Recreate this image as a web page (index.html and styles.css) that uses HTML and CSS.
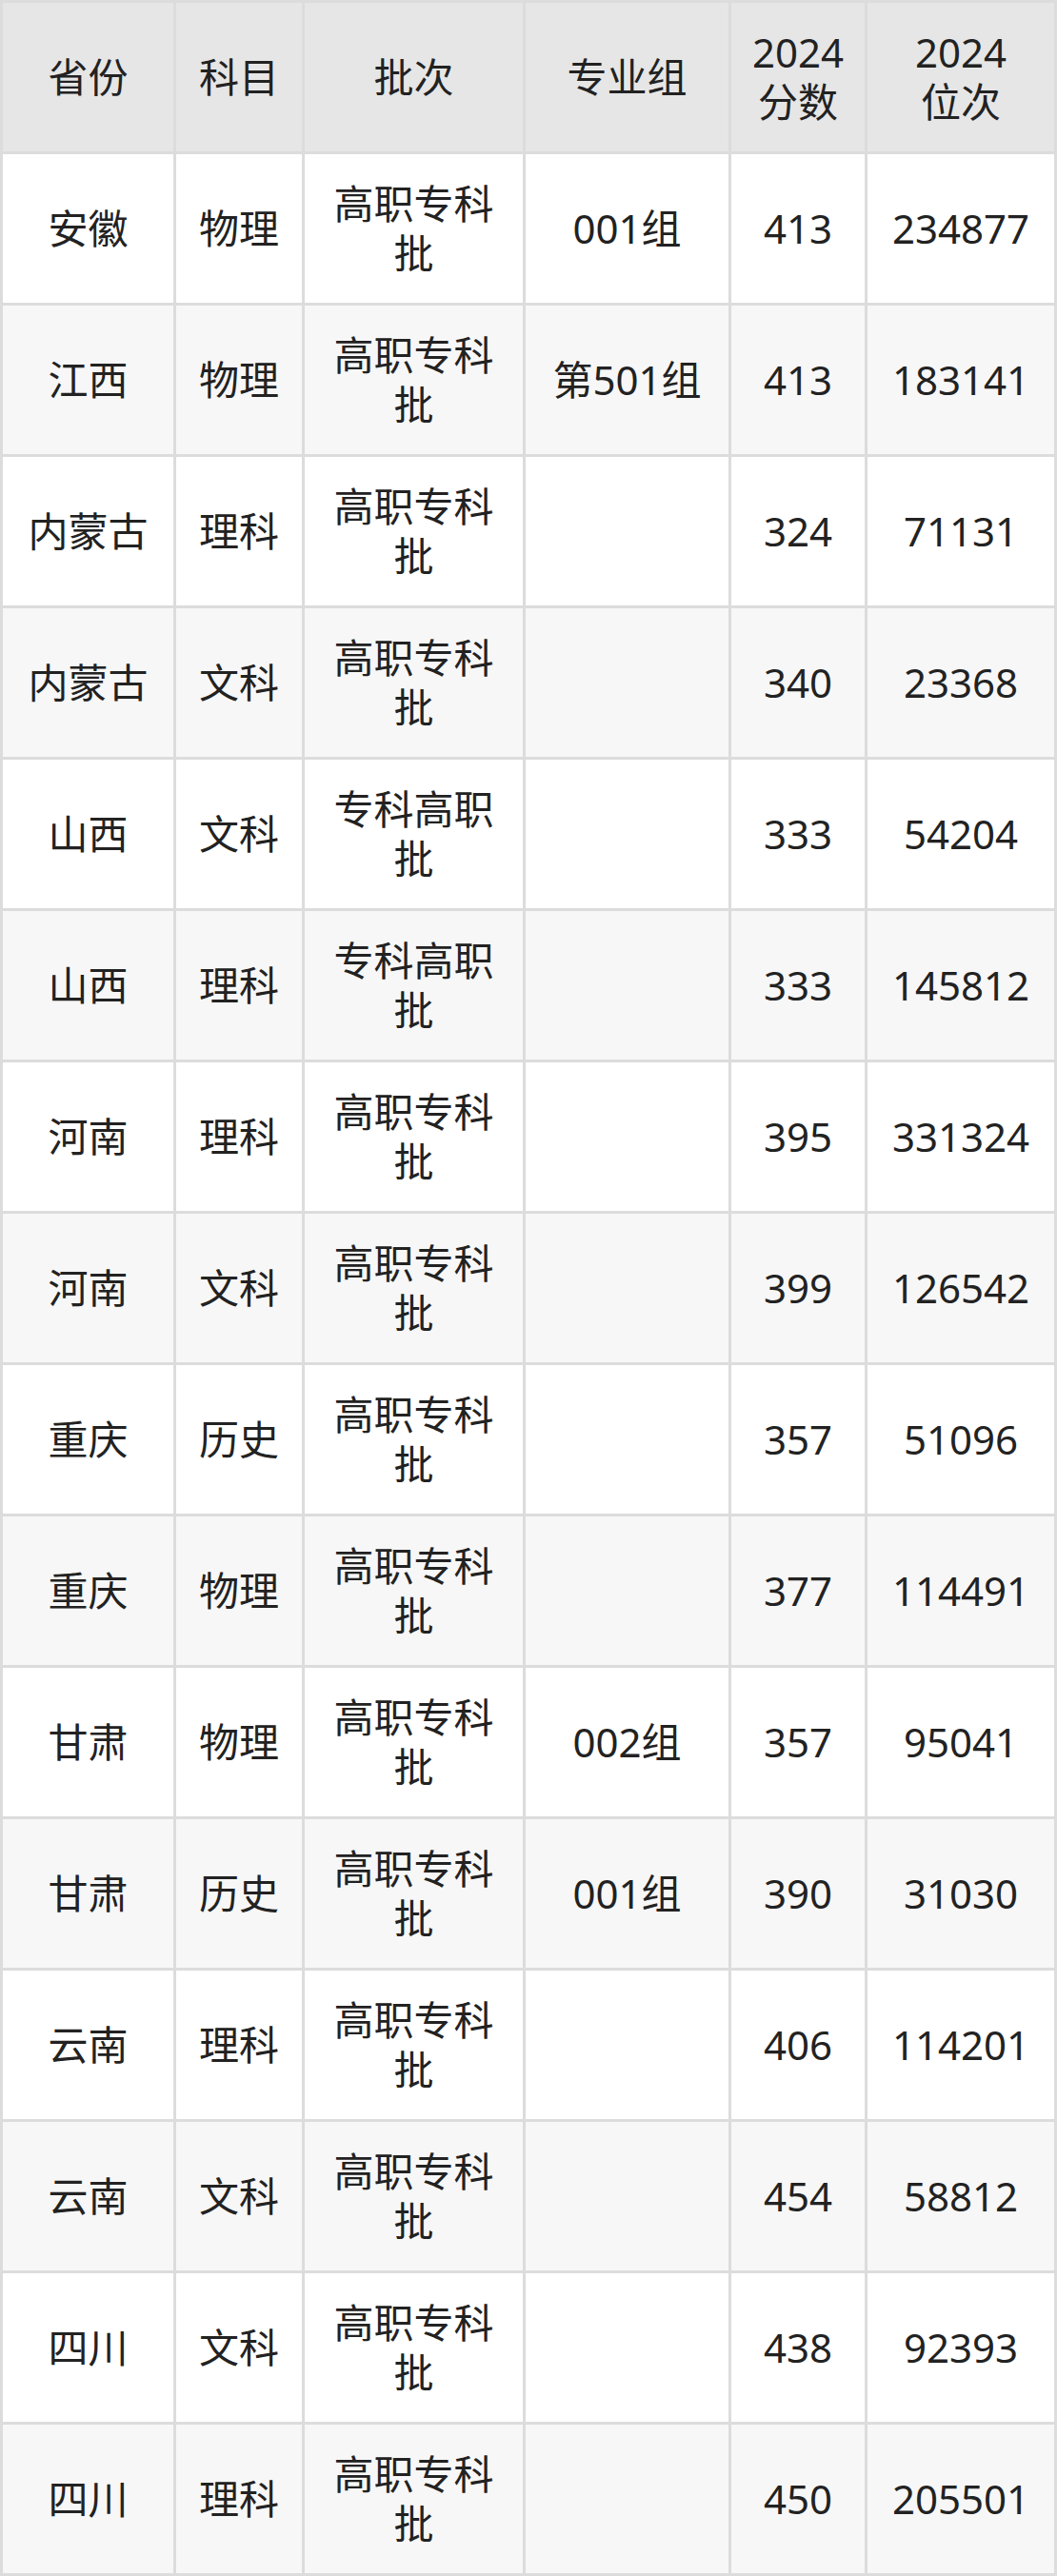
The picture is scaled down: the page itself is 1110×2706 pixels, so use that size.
FILE: index.html
```html
<!DOCTYPE html>
<html lang="zh-CN">
<head>
<meta charset="utf-8">
<title>2024 分数位次</title>
<link rel="stylesheet" href="styles.css">
</head>
<body>
<div class="table">
  <div class="cell head">省份</div>
  <div class="cell head">科目</div>
  <div class="cell head">批次</div>
  <div class="cell head">专业组</div>
  <div class="cell head">2024<br>分数</div>
  <div class="cell head">2024<br>位次</div>

  <div class="cell">安徽</div><div class="cell">物理</div><div class="cell">高职专科<br>批</div><div class="cell">001组</div><div class="cell">413</div><div class="cell">234877</div>
  <div class="cell alt">江西</div><div class="cell alt">物理</div><div class="cell alt">高职专科<br>批</div><div class="cell alt">第501组</div><div class="cell alt">413</div><div class="cell alt">183141</div>
  <div class="cell">内蒙古</div><div class="cell">理科</div><div class="cell">高职专科<br>批</div><div class="cell"></div><div class="cell">324</div><div class="cell">71131</div>
  <div class="cell alt">内蒙古</div><div class="cell alt">文科</div><div class="cell alt">高职专科<br>批</div><div class="cell alt"></div><div class="cell alt">340</div><div class="cell alt">23368</div>
  <div class="cell">山西</div><div class="cell">文科</div><div class="cell">专科高职<br>批</div><div class="cell"></div><div class="cell">333</div><div class="cell">54204</div>
  <div class="cell alt">山西</div><div class="cell alt">理科</div><div class="cell alt">专科高职<br>批</div><div class="cell alt"></div><div class="cell alt">333</div><div class="cell alt">145812</div>
  <div class="cell">河南</div><div class="cell">理科</div><div class="cell">高职专科<br>批</div><div class="cell"></div><div class="cell">395</div><div class="cell">331324</div>
  <div class="cell alt">河南</div><div class="cell alt">文科</div><div class="cell alt">高职专科<br>批</div><div class="cell alt"></div><div class="cell alt">399</div><div class="cell alt">126542</div>
  <div class="cell">重庆</div><div class="cell">历史</div><div class="cell">高职专科<br>批</div><div class="cell"></div><div class="cell">357</div><div class="cell">51096</div>
  <div class="cell alt">重庆</div><div class="cell alt">物理</div><div class="cell alt">高职专科<br>批</div><div class="cell alt"></div><div class="cell alt">377</div><div class="cell alt">114491</div>
  <div class="cell">甘肃</div><div class="cell">物理</div><div class="cell">高职专科<br>批</div><div class="cell">002组</div><div class="cell">357</div><div class="cell">95041</div>
  <div class="cell alt">甘肃</div><div class="cell alt">历史</div><div class="cell alt">高职专科<br>批</div><div class="cell alt">001组</div><div class="cell alt">390</div><div class="cell alt">31030</div>
  <div class="cell">云南</div><div class="cell">理科</div><div class="cell">高职专科<br>批</div><div class="cell"></div><div class="cell">406</div><div class="cell">114201</div>
  <div class="cell alt">云南</div><div class="cell alt">文科</div><div class="cell alt">高职专科<br>批</div><div class="cell alt"></div><div class="cell alt">454</div><div class="cell alt">58812</div>
  <div class="cell">四川</div><div class="cell">文科</div><div class="cell">高职专科<br>批</div><div class="cell"></div><div class="cell">438</div><div class="cell">92393</div>
  <div class="cell alt">四川</div><div class="cell alt">理科</div><div class="cell alt">高职专科<br>批</div><div class="cell alt"></div><div class="cell alt">450</div><div class="cell alt">205501</div>
</div>
</body>
</html>
```

FILE: styles.css
```css
html, body {
  margin: 0;
  padding: 0;
  background: #ffffff;
}

.table {
  display: grid;
  grid-template-columns: 179px 132px 229px 213px 140px 196px;
  grid-auto-rows: 156px;
  gap: 3px;
  padding: 3px;
  width: 1110px;
  box-sizing: border-box;
  background: #dcdcdc;
  font-family: "Noto Sans", "Noto Sans CJK SC", sans-serif;
  font-size: 42px;
  line-height: 52px;
  color: #222222;
}

.cell {
  display: flex;
  align-items: center;
  justify-content: center;
  text-align: center;
  background: #ffffff;
}

.cell.alt {
  background: #f7f7f7;
}

.cell.head {
  background: #e6e6e6;
}
```
